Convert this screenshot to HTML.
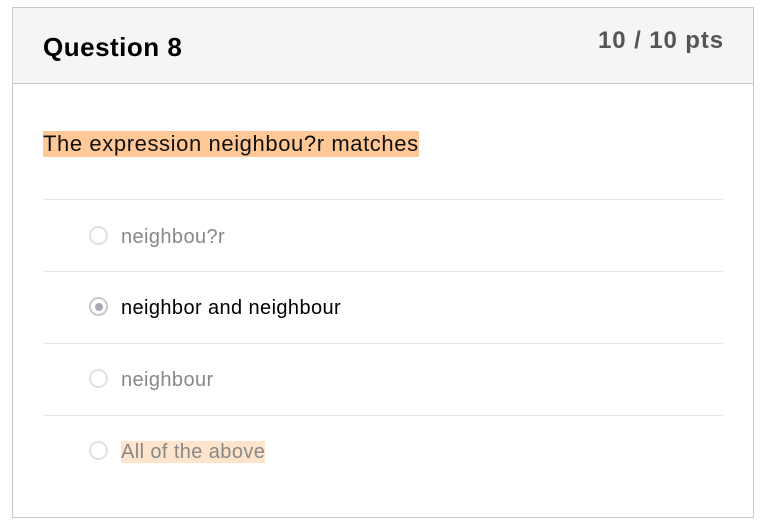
<!DOCTYPE html>
<html><head><style>
body{margin:0;background:#fff;font-family:"Liberation Sans",sans-serif;}
.box{position:absolute;left:12px;top:7px;width:740px;height:509px;border:1px solid #c7c7c7;}
.hdr{position:absolute;left:0;top:0;width:740px;height:75px;background:#f5f5f5;border-bottom:1px solid #c7c7c7;}
.t{position:absolute;left:30px;top:24px;font-size:26px;font-weight:bold;color:#000;letter-spacing:0.5px;}
.p{position:absolute;right:29px;top:19px;font-size:24px;font-weight:bold;color:#555;letter-spacing:0.9px;}
.q{position:absolute;left:30px;top:123px;font-size:22px;color:#111;background:#ffc896;padding:1px 0 2px;line-height:23px;letter-spacing:0.6px;}
.sep{position:absolute;left:30px;width:680px;height:1px;background:#e6e6e6;}
.o{position:absolute;left:108px;font-size:20px;color:#888;letter-spacing:0.4px;line-height:22px;}
.r{position:absolute;left:76px;width:15px;height:15px;border:2.5px solid #e0e0e4;border-radius:50%;background:#fff;}
</style></head><body>
<div class="box">
<div class="hdr"><div class="t">Question 8</div><div class="p">10 / 10 pts</div></div>
<div class="q">The expression neighbou?r matches</div>
<div class="sep" style="top:191px"></div>
<div class="r" style="top:218px"></div><div class="o" style="top:218px">neighbou?r</div>
<div class="sep" style="top:263px"></div>
<div class="r" style="top:289px;border-color:#c8c8cc"><div style="position:absolute;left:3.5px;top:3.5px;width:8px;height:8px;border-radius:50%;background:#a9a9b3"></div></div><div class="o" style="top:289px;color:#000">neighbor and neighbour</div>
<div class="sep" style="top:335px"></div>
<div class="r" style="top:361px"></div><div class="o" style="top:361px">neighbour</div>
<div class="sep" style="top:407px"></div>
<div class="r" style="top:433px"></div><div class="o" style="top:433px;background:#ffe4cc">All of the above</div>
</div>
</body></html>
